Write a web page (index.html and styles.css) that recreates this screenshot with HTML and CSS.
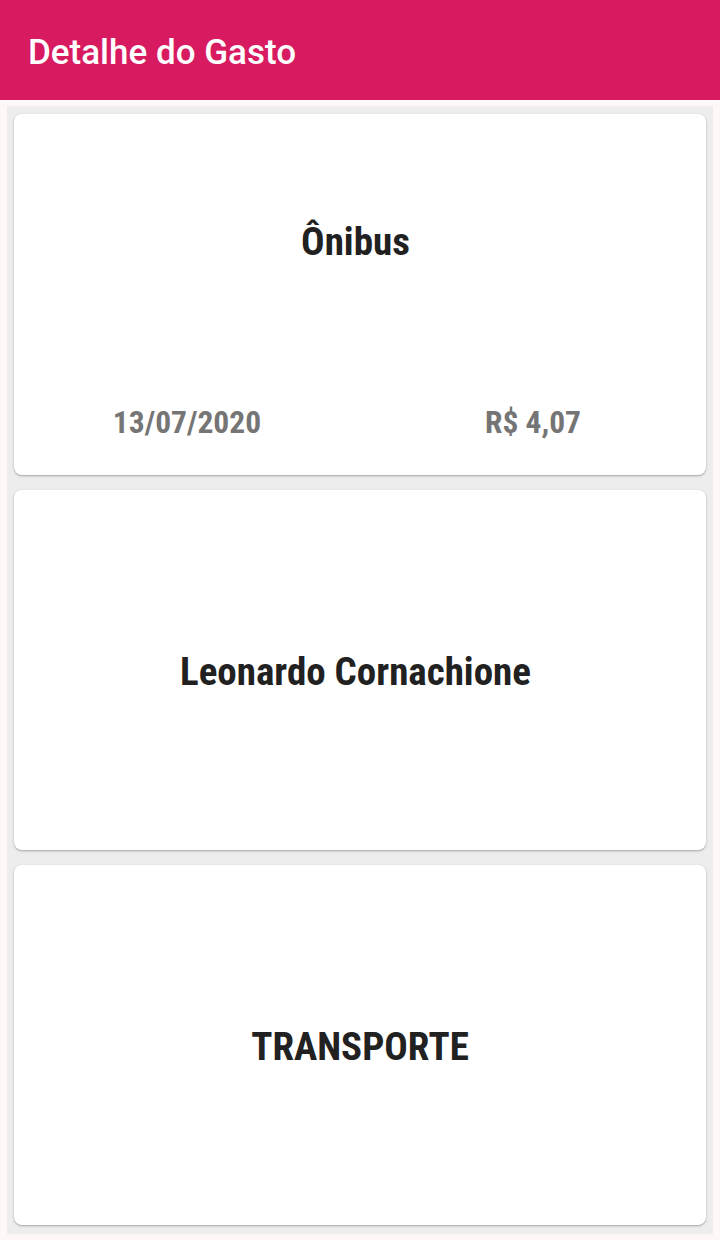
FILE: index.html
```html
<!DOCTYPE html>
<html lang="pt">
<head>
<meta charset="utf-8">
<title>Detalhe do Gasto</title>
<link rel="stylesheet" href="styles.css">
</head>
<body>
<header class="appbar">
  <h1 class="appbar-title">Detalhe do Gasto</h1>
</header>
<main class="content">
  <div class="panel">
    <section class="card card-main">
      <div class="card-title-area">
        <h2 class="card-title card-title-trail">Ônibus</h2>
      </div>
      <div class="card-meta">
        <span class="meta-item">13/07/2020</span>
        <span class="meta-item">R$ 4,07</span>
      </div>
    </section>
    <section class="card">
      <h2 class="card-title card-title-trail">Leonardo Cornachione</h2>
    </section>
    <section class="card">
      <h2 class="card-title">TRANSPORTE</h2>
    </section>
  </div>
</main>
</body>
</html>
```
FILE: styles.css
```css
html, body {
  margin: 0;
  padding: 0;
}
body {
  width: 720px;
  height: 1240px;
  background: #fdf7f8;
  font-family: Roboto, "Liberation Sans", sans-serif;
  overflow: hidden;
}
.appbar {
  height: 100px;
  background: #d81b60;
  display: flex;
  align-items: center;
  padding: 0 28px;
  box-sizing: border-box;
}
.appbar-title {
  margin: 0;
  color: #fff;
  font-size: 35px;
  font-weight: 500;
  letter-spacing: 0;
  padding-top: 4px;
}
.content {
  padding: 6px 7px 6px 7px;
}
.panel {
  background: #ededed;
  height: 1128px;
  box-sizing: border-box;
  padding: 8px 7px 0 7px;
  display: flex;
  flex-direction: column;
  gap: 15px;
}
.card {
  background: #fff;
  border-radius: 8px;
  height: 360px;
  box-shadow: 0 1px 3px rgba(0,0,0,0.22), 0 1px 1px rgba(0,0,0,0.12);
  display: flex;
  align-items: center;
  justify-content: center;
}
.card-main {
  height: 361px;
  flex-direction: column;
  align-items: stretch;
}
.card-title-area {
  height: 256px;
  display: flex;
  align-items: center;
  justify-content: center;
}
.card-title {
  margin: 0;
  padding-top: 4px;
  font-family: "Roboto Condensed", Roboto, sans-serif;
  font-stretch: condensed;
  font-weight: 700;
  font-size: 39px;
  color: #212121;
}
.card-title-trail {
  padding-right: 9px;
}
.card-main .card-title {
  padding-top: 0;
}
.card-meta {
  flex: 1;
  display: grid;
  grid-template-columns: 1fr 1fr;
  align-items: center;
  padding-bottom: 1px;
}
.meta-item {
  text-align: center;
  font-family: "Roboto Condensed", Roboto, sans-serif;
  font-stretch: condensed;
  font-weight: 700;
  font-size: 31.5px;
  color: #757575;
}
```
